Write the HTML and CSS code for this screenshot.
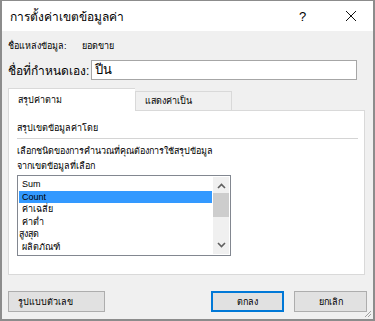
FILE: index.html
```html
<!DOCTYPE html>
<html lang="th">
<head>
  <meta charset="UTF-8">
  <meta name="viewport" content="width=device-width, initial-scale=1.0">
  <title>การตั้งค่าเขตข้อมูลค่า</title>
  <link rel="stylesheet" href="styles.css">
</head>
<body>
  <div class="dialog">
    <div class="titlebar">
      <span class="title">การตั้งค่าเขตข้อมูลค่า</span>
      <span class="help">?</span>
      <span class="close">
        <svg width="12" height="12" viewBox="0 0 12 12"><path d="M1 1L11 11M11 1L1 11" stroke="#111" stroke-width="1"/></svg>
      </span>
    </div>

    <div class="body">
      <div class="source">
        <span class="source-label">ชื่อแหล่งข้อมูล:</span>
        <span>ยอดขาย</span>
      </div>
      <div class="custom">
        <label class="custom-label">ชื่อที่กำหนดเอง:</label>
        <div class="input">ปีน</div>
      </div>

      <div class="tabs">
        <div class="tab active">สรุปค่าตาม</div>
        <div class="tab">แสดงค่าเป็น</div>
      </div>
      <div class="panel">
        <div class="section">สรุปเขตข้อมูลค่าโดย</div>
        <div class="rule"></div>
        <div class="hint">เลือกชนิดของการคำนวณที่คุณต้องการใช้สรุปข้อมูล</div>
        <div class="hint">จากเขตข้อมูลที่เลือก</div>
        <div class="listbox">
          <ul class="items">
            <li>Sum</li>
            <li class="selected">Count</li>
            <li>ค่าเฉลี่ย</li>
            <li>ค่าต่ำ</li>
            <li class="shifted">สูงสุด</li>
            <li>ผลิตภัณฑ์</li>
          </ul>
          <div class="scrollbar">
            <svg class="arrow" width="9" height="6" viewBox="0 0 9 6"><path d="M1 5L4.5 1.5L8 5" fill="none" stroke="#606060" stroke-width="1.6"/></svg>
            <div class="thumb"></div>
            <div class="track"></div>
            <svg class="arrow" width="9" height="6" viewBox="0 0 9 6"><path d="M1 1L4.5 4.5L8 1" fill="none" stroke="#606060" stroke-width="1.6"/></svg>
          </div>
        </div>
      </div>

      <div class="buttons">
        <button class="btn">รูปแบบตัวเลข</button>
        <span class="spacer"></span>
        <button class="btn default">ตกลง</button>
        <button class="btn">ยกเลิก</button>
      </div>
    </div>
    <svg class="grip" width="8" height="8" viewBox="0 0 8 8"><path d="M7 1L1 7M7 4L4 7" stroke="#a0a0a0" stroke-width="1"/></svg>
  </div>
</body>
</html>
```

FILE: styles.css
```css
html, body { margin: 0; height: 100%; }
body { font-family: "Liberation Sans", "Noto Sans", sans-serif; font-size: 9px; color: #000; }
.dialog {
  position: relative;
  box-sizing: border-box;
  height: 321px;
  border: 2px solid #8c8c8c;
  border-top-width: 1px;
  background: #f0f0f0;
  display: flex;
  flex-direction: column;
}
.titlebar {
  height: 30px;
  background: #fff;
  display: flex;
  align-items: center;
  padding-left: 8px;
}
.title { font-size: 12px; flex: 1; }
.help { font-size: 13px; width: 14px; margin-right: 32px; }
.close { width: 12px; margin-right: 16px; display: flex; }
.body { flex: 1; padding: 0 6px 0 6px; display: flex; flex-direction: column; }
.source { display: flex; margin-top: 9px; height: 12px; align-items: center; }
.source-label { width: 74px; }
.custom { display: flex; align-items: center; margin-top: 8px; }
.custom-label { font-size: 12px; width: 83px; }
.input {
  flex: 1;
  height: 18px;
  margin-right: 10px;
  background: #fff;
  border: 1px solid #a6a6a6;
  font-size: 13px;
  line-height: 18px;
  padding-left: 3px;
}
.tabs { display: flex; align-items: flex-end; margin-top: 8px; height: 22px; }
.tab {
  box-sizing: border-box;
  height: 19px;
  width: 97px;
  padding-left: 9px;
  line-height: 18px;
  background: #f0f0f0;
  border: 1px solid #d9d9d9;
  border-bottom: none;
}
.tab.active {
  width: 127px;
  height: 23px;
  background: #fff;
  margin-bottom: -1px;
  position: relative;
  line-height: 22px;
  border-right: none;
}
.panel {
  height: 163px;
  margin-right: 2px;
  background: #fff;
  border: 1px solid #d9d9d9;
  padding: 0 6px 0 8px;
}
.section { margin-top: 10px; height: 12px; }
.rule { height: 1px; background: #d4d4d4; margin: 5px 0 5px 0; }
.hint { height: 15px; line-height: 15px; }
.listbox {
  display: flex;
  width: 212px;
  height: 79px;
  border: 1px solid #828790;
  margin-top: 1px;
}
.items { list-style: none; margin: 0; padding: 2px 0 0 1px; flex: 1; }
.items li { height: 12.5px; line-height: 12.5px; padding-left: 3px; }
.items li.selected { background: #3399ff; }
.items li.shifted { margin-left: -3px; }
.scrollbar {
  width: 16px;
  margin: 1px;
  background: #f0f0f0;
  display: flex;
  flex-direction: column;
  align-items: center;
}
.arrow { margin: 6px 0 4px; }
.thumb { width: 16px; height: 24px; background: #cdcdcd; }
.track { flex: 1; }
.scrollbar .arrow:last-child { margin: 4px 0 6px; }
.buttons { display: flex; margin-top: 16px; gap: 10px; }
.spacer { flex: 1; }
.btn {
  box-sizing: border-box;
  width: 73px;
  height: 21px;
  font: inherit;
  background: #e1e1e1;
  border: 1px solid #adadad;
  padding: 0;
}
.btn:first-child { width: 97px; text-align: left; padding-left: 9px; }
.btn.default { border: 2px solid #0078d7; }
.grip { position: absolute; right: 1px; bottom: 1px; }
```
